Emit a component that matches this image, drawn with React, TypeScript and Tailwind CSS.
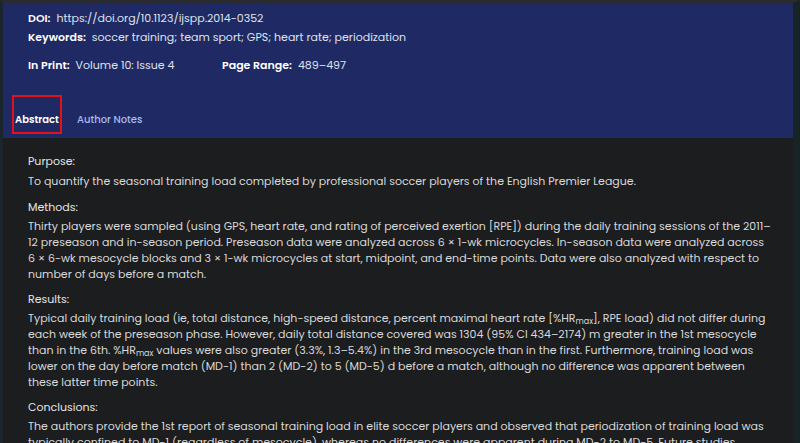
import React from "react";

const font = { fontFamily: '"Poppins", "Inter", "Noto Sans", sans-serif' };

export default function App() {
  return (
    <div
      className="w-[800px] h-[443px] overflow-hidden bg-[#1c1d1f] border-t-[3px] border-t-[#2a2a31] border-l-[3px] border-l-[#1a252c] border-r-[7px] border-r-[#162425]"
      style={font}
    >
      <div className="bg-[#1f2a64] pl-[25px] pt-[6px] pb-[4px] h-[135px] flex flex-col text-[11px] text-[#dfe2ec]">
        <div className="leading-[19px]">
          <span className="font-semibold text-white">DOI:</span>
          <span className="ml-[6px]">https://doi.org/10.1123/ijspp.2014-0352</span>
        </div>
        <div className="leading-[19px]">
          <span className="font-semibold text-white">Keywords:</span>
          <span className="ml-[6px]">soccer training; team sport; GPS; heart rate; periodization</span>
        </div>
        <div className="leading-[19px] mt-[9px] flex">
          <div className="w-[194px]">
            <span className="font-semibold text-white">In Print:</span>
            <span className="ml-[6px]">Volume 10: Issue 4</span>
          </div>
          <div>
            <span className="font-semibold text-white">Page Range:</span>
            <span className="ml-[6px]">489–497</span>
          </div>
        </div>
        <div className="mt-auto flex items-end -ml-[16px] text-[10px] leading-[14px]">
          <div className="px-[1px] pb-[5px] h-[39px] flex items-end border-2 border-[#e3121a]">
            <span className="font-semibold text-white">Abstract</span>
          </div>
          <div className="pb-[7px] h-[39px] flex items-end ml-[15px] text-[#a9bcf0] font-medium">Author Notes</div>
        </div>
      </div>
      <div className="pl-[25px] pr-[22px] pt-[15px] text-[11px] leading-[16px] text-[#d9d9d9]">
        <div className="text-[#e6e6e6] mb-[4px]">Purpose:</div>
        <p className="mb-[10px]">
          To quantify the seasonal training load completed by professional soccer players of the English Premier League.
        </p>
        <div className="text-[#e6e6e6] mb-[3px]">Methods:</div>
        <p className="mb-[9px]">
          Thirty players were sampled (using GPS, heart rate, and rating of perceived exertion [RPE]) during the daily training sessions of the 2011–12 preseason and in-season period. Preseason data were analyzed across 6 × 1-wk microcycles. In-season data were analyzed across 6 × 6-wk mesocycle blocks and 3 × 1-wk microcycles at start, midpoint, and end-time points. Data were also analyzed with respect to number of days before a match.
        </p>
        <div className="text-[#e6e6e6] mb-[3px]">Results:</div>
        <p className="mb-[9px]">
          Typical daily training load (ie, total distance, high-speed distance, percent maximal heart rate [%HR
          <sub className="text-[8px] leading-none">max</sub>], RPE load) did not differ during each week of the preseason phase. However, daily total distance covered was 1304 (95% CI 434–2174) m greater in the 1st mesocycle than in the 6th. %HR
          <sub className="text-[8px] leading-none">max</sub> values were also greater (3.3%, 1.3–5.4%) in the 3rd mesocycle than in the first. Furthermore, training load was lower on the day before match (MD-1) than 2 (MD-2) to 5 (MD-5) d before a match, although no difference was apparent between these latter time points.
        </p>
        <div className="text-[#e6e6e6] mb-[3px]">Conclusions:</div>
        <p>
          The authors provide the 1st report of seasonal training load in elite soccer players and observed that periodization of training load was typically confined to MD-1 (regardless of mesocycle), whereas no differences were apparent during MD-2 to MD-5. Future studies should evaluate the effects of different training-load periodization strategies on physiological adaptations and match performance.
        </p>
      </div>
    </div>
  );
}
